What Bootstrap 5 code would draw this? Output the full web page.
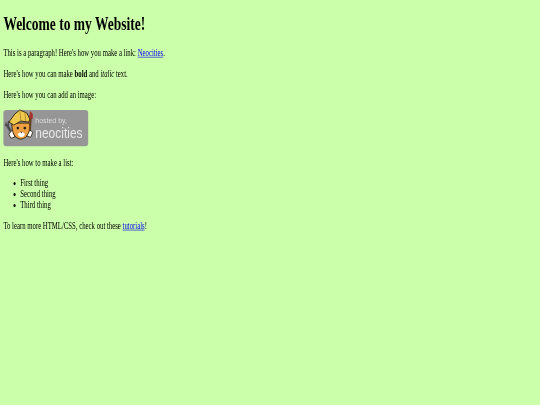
<!DOCTYPE html>
<html lang="en">
<head>
<meta charset="utf-8">
<title>Welcome</title>
<link href="https://cdn.jsdelivr.net/npm/bootstrap@5.3.0/dist/css/bootstrap.min.css" rel="stylesheet">
<style>
html{overflow:hidden}
body{background:#ccffaa;color:#000;font-family:"Liberation Serif",serif;font-size:16px;line-height:normal;margin:0}
.squeeze{display:flow-root;width:500px;padding:0 8px;transform-origin:0 0;transform:scale(.4219,.611);filter:blur(.25px)}
h1{font-family:"Liberation Serif",serif;font-size:32px;font-weight:700;line-height:normal;margin:19.8px 0 21.44px;white-space:nowrap}
p{margin:16px 0;white-space:nowrap}
a{color:#00e}
ul{margin:16px 0;padding-left:40px}
.badge-art{display:block;width:201px;height:61px;overflow:visible}
.hosted{font-family:"Liberation Sans",sans-serif;font-size:7px;fill:#dcdcdc}
.brand{font-family:"Liberation Sans",sans-serif;font-size:12px;fill:#e8e8e8}
</style>
</head>
<body>
<div class="squeeze">
<h1>Welcome to my Website!</h1>
<p>This is a paragraph! Here's how you make a link: <a href="#">Neocities</a>.</p>
<p>Here's how you can make <strong>bold</strong> and <em>italic</em> text.</p>
<p>Here's how you can add an image:</p>
<p><svg class="badge-art" viewBox="0 1 85 37" preserveAspectRatio="none">
<rect y="1" width="85" height="36" rx="3" fill="#969696"/>
<path d="M3 15 9 25" stroke="#4c4c4c" stroke-width="2.500"/>
<path d="M2 17 3 13M5 12 5 17" stroke="#4c4c4c" stroke-width="1.200"/>
<g transform="translate(-2.500 0)">
<path d="M8 25 12 20 14 28 10 29z" fill="#fff" stroke="#2d2214" stroke-width=".8"/>
<path d="M11 14C11 23 13 29 20 30 27 29 30 23 29 14z" fill="#ee9f3f" stroke="#2d2214" stroke-width=".9"/>
<path d="M17 25C18 22.500 23 22.500 24 25 23 29 18 29 17 25z" fill="#fff"/>
<path d="M8 13 14 5 19 1 26 4 29 10 28 13 20 12 13 16z" fill="#eec94c" stroke="#2d2214" stroke-width=".9"/>
<path d="M19 1 20 12M24 3 25 12" stroke="#a9862a" stroke-width=".8"/>
<circle cx="17" cy="19" r="1.300" fill="#222"/><circle cx="24" cy="19" r="1.300" fill="#222"/>
<path d="M19.500 22.500h2l-1 1.600z" fill="#222"/>
<path d="M29 22 30 8" stroke="#6b3f22" stroke-width="2"/>
<path d="M28 9 29.500 2 32 5 32 10z" fill="#a8332a"/>
<path d="M26 27 29 21 32 23 30 28z" fill="#fff" stroke="#2d2214" stroke-width=".8"/>
</g>
<text x="32" y="14" class="hosted">hosted by,</text>
<text class="brand" transform="translate(32 29) scale(1 1.25)">neocities</text>
</svg></p>
<p>Here's how to make a list:</p>
<ul><li>First thing</li><li>Second thing</li><li>Third thing</li></ul>
<p>To learn more HTML/CSS, check out these <a href="#">tutorials</a>!</p>
</div>
<script src="https://cdn.jsdelivr.net/npm/bootstrap@5.3.0/dist/js/bootstrap.bundle.min.js"></script>
</body>
</html>
